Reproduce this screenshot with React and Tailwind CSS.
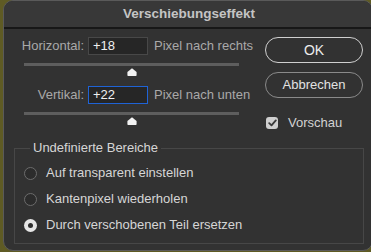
import React from 'react'

function Thumb({ offset }) {
  return (
    <svg width="10" height="8" viewBox="0 0 10 8" className="block mt-[2px]" style={{ marginLeft: offset }}>
      <path d="M5 0.3 L9.6 4 L9.6 7.2 Q9.6 8 8.8 8 L1.2 8 Q0.4 8 0.4 7.2 L0.4 4 Z" fill="#f2f2f2" />
    </svg>
  )
}

function Radio({ checked, label }) {
  return (
    <div className="flex items-center h-[26px] pl-[9px]">
      {checked ? (
        <span className="w-[13px] h-[13px] rounded-full bg-[#e6e6e6] flex items-center justify-center">
          <span className="w-[5px] h-[5px] rounded-full bg-[#2e2e2e]" />
        </span>
      ) : (
        <span className="w-[13px] h-[13px] rounded-full border border-[#6c6c6c] bg-[#2c2c2c]" />
      )}
      <span className="ml-[9px] text-[13px] text-[#d6d6d6] whitespace-nowrap">{label}</span>
    </div>
  )
}

export default function App() {
  return (
    <div className="w-[371px] h-[252px] bg-[#5f5b24] overflow-hidden font-['Liberation_Sans',Arial,sans-serif]">
      <div className="ml-[3px] w-[370px] h-[251px] bg-[#323232] border border-[#5a5a5a] rounded-[10px] overflow-hidden">
        {/* Title bar */}
        <div className="h-[28px] bg-[#383838] border-b-2 border-[#171717] flex items-center justify-center pl-[2px]">
          <span className="text-[13.5px] font-bold text-[#c4c4c4]">Verschiebungseffekt</span>
        </div>

        <div className="pl-[10px]">
          <div className="flex">
            {/* Left: offsets */}
            <div className="w-[251px] shrink-0">
              <div className="flex items-center h-[18px] mt-[8px] whitespace-nowrap">
                <span className="w-[70px] text-right text-[13px] text-[#a9a9a9]">Horizontal:</span>
                <span className="ml-[4px] w-[60px] h-[18px] bg-[#262626] border border-[#484848] text-[13px] text-[#f0f0f0] pl-[4px] leading-[16px]">+18</span>
                <span className="ml-[6px] text-[13px] text-[#a9a9a9]">Pixel nach rechts</span>
              </div>
              <div className="mt-[8px] ml-[10px] w-[215px] h-[3px] bg-[#5e5e5e]" />
              <Thumb offset={113} />

              <div className="flex items-center h-[18px] mt-[10px] whitespace-nowrap">
                <span className="w-[70px] text-right text-[13px] text-[#a9a9a9]">Vertikal:</span>
                <span className="ml-[4px] w-[60px] h-[18px] bg-[#262626] border border-[#1f63d6] text-[13px] text-[#f0f0f0] pl-[4px] leading-[16px]">+22</span>
                <span className="ml-[6px] text-[13px] text-[#a9a9a9]">Pixel nach unten</span>
              </div>
              <div className="mt-[8px] ml-[10px] w-[215px] h-[3px] bg-[#5e5e5e]" />
              <Thumb offset={113} />
            </div>

            {/* Right: buttons */}
            <div className="w-[98px] shrink-0">
              <button className="mt-[8px] w-[98px] h-[26px] rounded-full border-[1.5px] border-[#d0d0d0] text-[14px] text-[#ececec] flex items-center justify-center">
                OK
              </button>
              <button className="mt-[9px] w-[98px] h-[26px] rounded-full border border-[#8a8a8a] text-[13px] text-[#e2e2e2] flex items-center justify-center">
                Abbrechen
              </button>
              <div className="mt-[19px] ml-[1px] flex items-center h-[12px]">
                <span className="w-[12px] h-[12px] rounded-[3px] bg-[#cfcfcf] flex items-center justify-center">
                  <svg width="9" height="8" viewBox="0 0 9 8">
                    <path d="M1.2 4.2 L3.5 6.4 L7.8 1.4" fill="none" stroke="#3a3a3a" strokeWidth="1.8" strokeLinecap="round" strokeLinejoin="round" />
                  </svg>
                </span>
                <span className="ml-[10px] text-[13px] text-[#d2d2d2]">Vorschau</span>
              </div>
            </div>
          </div>

          {/* Undefined areas group */}
          <fieldset className="mt-[11px] w-[350px] h-[104px] border border-[#474747]">
            <legend className="ml-[15px] px-[3px] text-[13px] leading-[16px] text-[#d6d6d6]">Undefinierte Bereiche</legend>
            <div className="pt-[4px]">
              <Radio label="Auf transparent einstellen" />
              <Radio label="Kantenpixel wiederholen" />
              <Radio checked label="Durch verschobenen Teil ersetzen" />
            </div>
          </fieldset>
        </div>
      </div>
    </div>
  )
}
